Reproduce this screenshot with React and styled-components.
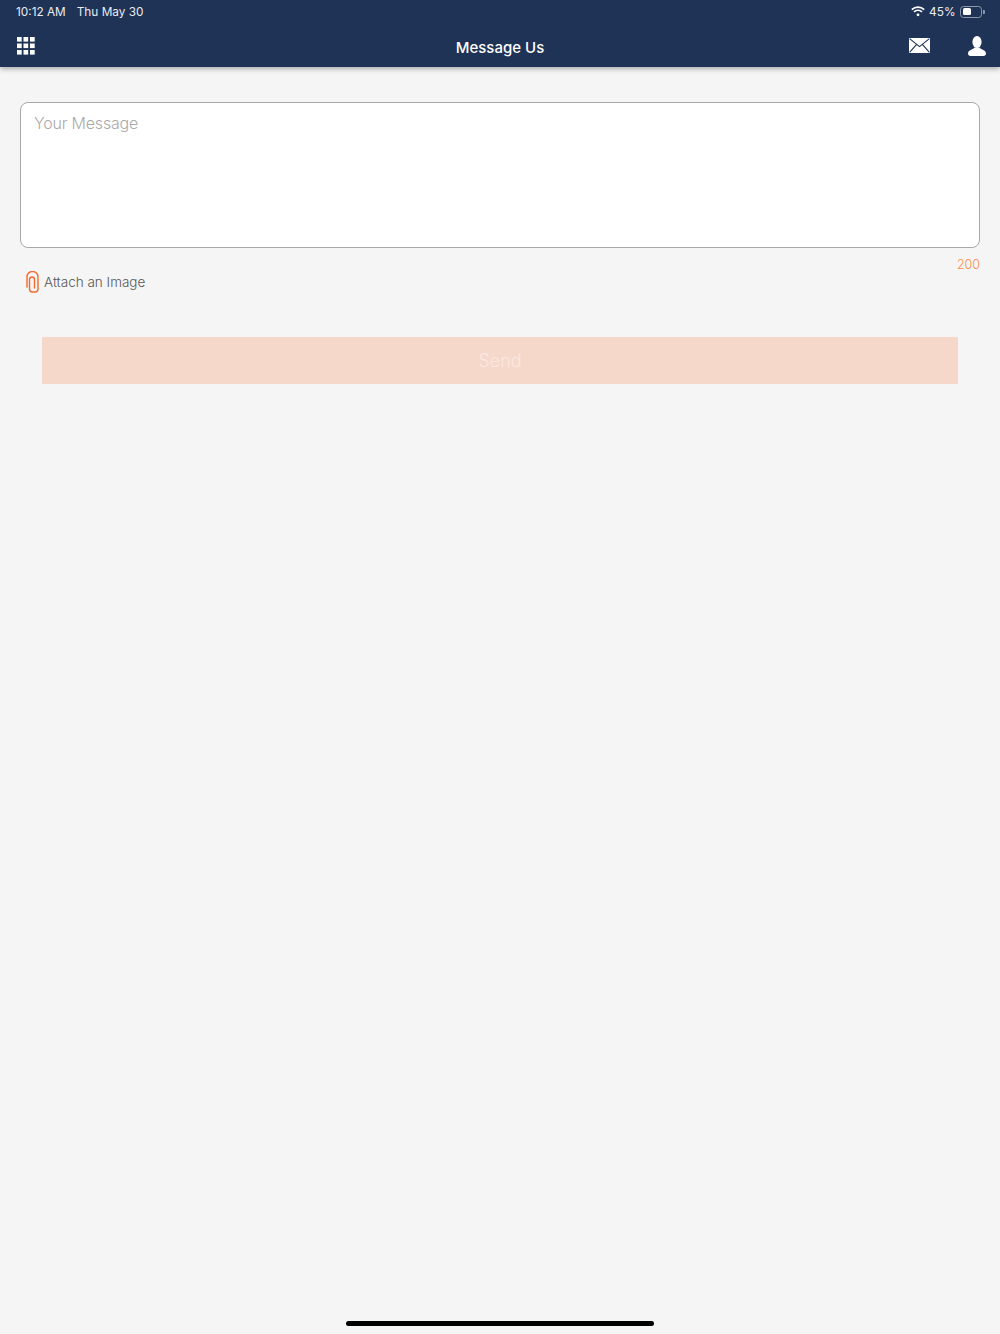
import React from 'react'
import styled, { createGlobalStyle } from 'styled-components'

const Global = createGlobalStyle`
  html, body {
    margin: 0;
    padding: 0;
    background: #f5f5f5;
  }
  * {
    box-sizing: border-box;
  }
`

const Page = styled.div`
  width: 1000px;
  height: 1334px;
  display: flex;
  flex-direction: column;
  background: #f5f5f5;
  font-family: Inter, "Liberation Sans", sans-serif;
  overflow: hidden;
`

const Header = styled.header`
  flex: none;
  height: 67px;
  background: #1f3356;
  color: #fff;
  box-shadow: 0 2px 5px rgba(0, 0, 0, 0.3);
`

const StatusBar = styled.div`
  height: 24px;
  padding: 0 18px 1px 16px;
  display: flex;
  align-items: center;
  justify-content: space-between;
  font-size: 11.8px;
  color: #e9ebf0;
`

const StatusGroup = styled.div`
  display: flex;
  align-items: center;
  gap: ${(p) => p.$gap}px;
`

const NavBar = styled.div`
  height: 43px;
  padding: 0 15px;
  display: grid;
  grid-template-columns: 1fr auto 1fr;
  align-items: center;
`

const NavTitle = styled.h1`
  margin: 4px 0 0;
  font-size: 15px;
  font-weight: 500;
  letter-spacing: 0;
`

const NavIcons = styled.div`
  display: flex;
  align-items: center;
  justify-content: flex-end;
  gap: 38px;
  margin-right: -1px;
`

const GridWrap = styled.div`
  display: flex;
  margin-left: 2px;
`

const Content = styled.main`
  flex: 1;
  display: flex;
  flex-direction: column;
  padding: 35px 20px 0;
`

const MessageBox = styled.div`
  height: 146px;
  padding: 10px 13px;
  background: #fff;
  border: 1px solid #a8a8a8;
  border-radius: 8px;
  color: #aaa;
  font-size: 16px;
  line-height: 20px;
  font-weight: 300;
  letter-spacing: -0.2px;
`

const Counter = styled.div`
  margin-top: 10px;
  height: 14px;
  text-align: right;
  font-size: 12.5px;
  line-height: 14px;
  color: #fb8a46;
  font-weight: 300;
`

const AttachRow = styled.div`
  display: flex;
  align-items: center;
  gap: 5px;
  margin-top: -1px;
  padding-left: 6px;
  font-size: 13.5px;
  font-weight: 300;
  color: #555;
`

const SendButton = styled.button`
  display: block;
  width: 916px;
  height: 47px;
  margin: 44px 0 0 22px;
  padding: 0;
  border: 0;
  border-radius: 1px;
  background: #f6d8cb;
  color: #f9e8e0;
  font-family: inherit;
  font-size: 18px;
  font-weight: 300;
`

const HomeIndicator = styled.div`
  width: 308px;
  height: 5px;
  margin: auto auto 8px;
  border-radius: 3px;
  background: #000;
`

const BatteryShell = styled.div`
  position: relative;
  width: 22px;
  height: 12px;
  padding: 1.5px;
  border: 1px solid #8c97aa;
  border-radius: 3.5px;

  &::after {
    content: '';
    position: absolute;
    top: 3px;
    right: -3.5px;
    width: 2px;
    height: 4px;
    border-radius: 0 1px 1px 0;
    background: #8c97aa;
  }
`

const BatteryFill = styled.div`
  height: 100%;
  border-radius: 1.5px;
  background: #fff;
`

const WifiIcon = () => (
  <svg width="14" height="11" viewBox="0 0 14 11" fill="none" stroke="#fff" strokeWidth="1.7">
    <path d="M.8 3.6C4.3.4 9.7.4 13.2 3.6" />
    <path d="M3 5.9c2.3-2 5.7-2 8 0" />
    <circle cx="7" cy="8.8" r="1.4" fill="#fff" stroke="none" />
  </svg>
)

const GridIcon = () => (
  <svg width="18" height="18" viewBox="0 0 18 18" fill="#fff">
    {[0, 6.5, 13].map((y) =>
      [0, 6.5, 13].map((x) => <rect key={`${x}-${y}`} x={x} y={y} width="4.7" height="4.6" />)
    )}
  </svg>
)

const MailIcon = () => (
  <svg width="21" height="15" viewBox="0 0 21 15">
    <rect x="0" y="0" width="21" height="15" fill="#fff" />
    <path d="M.6 .6 10.5 8.6 20.4 .6M.6 14.4 7.6 6.4M20.4 14.4 13.4 6.4" fill="none" stroke="#1f3356" strokeWidth="1.1" />
  </svg>
)

const UserIcon = () => (
  <svg width="18" height="20" viewBox="0 0 18 20" fill="#fff">
    <ellipse cx="9" cy="6" rx="4.6" ry="6" />
    <path d="M6.5 11.5C5.5 13.5 0 14 0 17.5 0 19 1 20 2.5 20h13c1.5 0 2.5-1 2.5-2.5 0-3.5-5.5-4-6.5-6z" />
  </svg>
)

const ClipIcon = () => (
  <svg width="13" height="22" viewBox="0 0 13 22" fill="none" stroke="#f26a2e" strokeWidth="1.4" strokeLinecap="round">
    <path d="M1 16V6a5.5 5.5 0 0 1 11 0v12a3 3 0 0 1-3 3H6.5a3 3 0 0 1-3-3V8.5a2.5 2.5 0 0 1 5 0V17" />
  </svg>
)

const App = () => (
  <Page>
    <Global />
    <Header>
      <StatusBar>
        <StatusGroup $gap={11}>
          <span>10:12 AM</span>
          <span>Thu May 30</span>
        </StatusGroup>
        <StatusGroup $gap={4.5}>
          <WifiIcon />
          <span>45%</span>
          <BatteryShell>
            <BatteryFill style={{ width: '52%' }} />
          </BatteryShell>
        </StatusGroup>
      </StatusBar>
      <NavBar>
        <GridWrap>
          <GridIcon />
        </GridWrap>
        <NavTitle>Message Us</NavTitle>
        <NavIcons>
          <MailIcon />
          <UserIcon />
        </NavIcons>
      </NavBar>
    </Header>
    <Content>
      <MessageBox>Your Message</MessageBox>
      <Counter>200</Counter>
      <AttachRow>
        <ClipIcon />
        <span>Attach an Image</span>
      </AttachRow>
      <SendButton>Send</SendButton>
      <HomeIndicator />
    </Content>
  </Page>
)

export default App
